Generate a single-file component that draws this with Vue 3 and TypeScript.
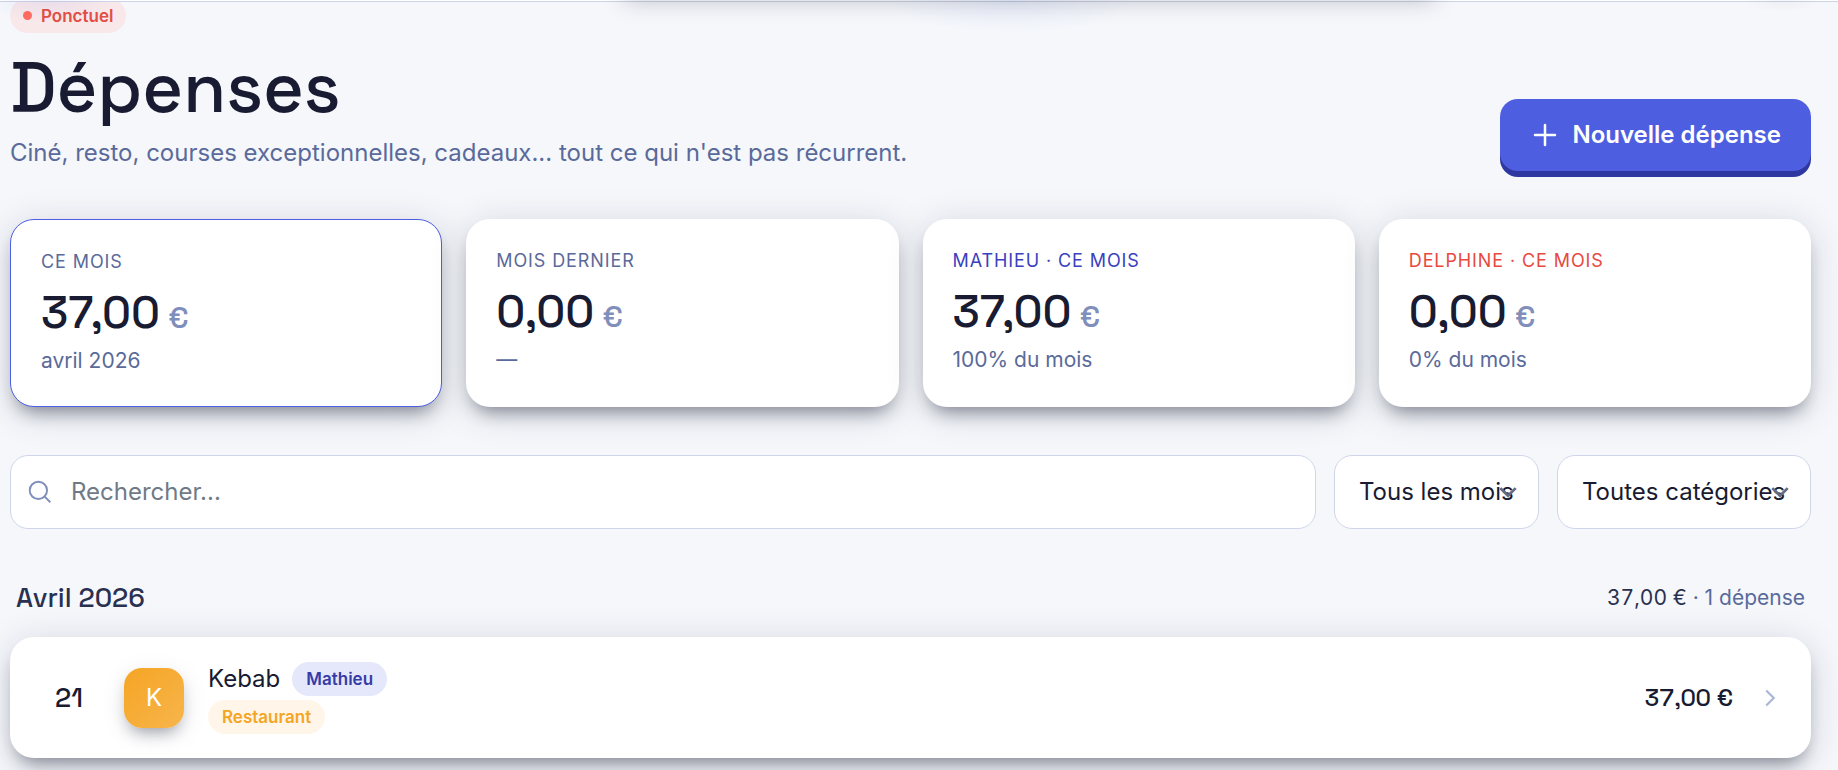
<script setup lang="ts">
import { ref } from 'vue'

interface Stat {
  label: string
  amount: string
  note: string
  tone?: 'indigo' | 'coral'
  active?: boolean
}

const stats: Stat[] = [
  { label: 'Ce mois', amount: '37,00', note: 'avril 2026', active: true },
  { label: 'Mois dernier', amount: '0,00', note: '—' },
  { label: 'Mathieu · ce mois', amount: '37,00', note: '100% du mois', tone: 'indigo' },
  { label: 'Delphine · ce mois', amount: '0,00', note: '0% du mois', tone: 'coral' },
]

const search = ref('')
const month = ref('all')
const category = ref('all')
</script>

<template>
  <div class="page">
    <div class="topbar"></div>
    <main class="content">
      <header class="head">
        <div class="intro">
          <span class="tag"><i class="dot"></i>Ponctuel</span>
          <h1>Dépenses</h1>
          <p>Ciné, resto, courses exceptionnelles, cadeaux... tout ce qui n'est pas récurrent.</p>
        </div>
        <button class="primary" type="button">
          <svg viewBox="0 0 24 24" aria-hidden="true"><path d="M12 4v16M4 12h16" /></svg>
          Nouvelle dépense
        </button>
      </header>

      <section class="stats">
        <article v-for="s in stats" :key="s.label" class="stat" :class="[s.tone, { active: s.active }]">
          <div class="label">{{ s.label }}</div>
          <div class="amount">{{ s.amount }}<span class="cur">€</span></div>
          <div class="note">{{ s.note }}</div>
        </article>
      </section>

      <form class="filters" @submit.prevent>
        <div class="search">
          <svg viewBox="0 0 24 24" aria-hidden="true">
            <circle cx="10.5" cy="10.5" r="8" />
            <path d="m16.3 16.3 5.2 5.2" />
          </svg>
          <input v-model="search" type="text" placeholder="Rechercher..." aria-label="Rechercher" />
        </div>
        <div class="pick months">
          <select v-model="month" aria-label="Mois">
            <option value="all">Tous les mois</option>
          </select>
          <svg viewBox="0 0 16 10" aria-hidden="true"><path d="m1 1 7 7 7-7" /></svg>
        </div>
        <div class="pick categories">
          <select v-model="category" aria-label="Catégorie">
            <option value="all">Toutes catégories</option>
          </select>
          <svg viewBox="0 0 16 10" aria-hidden="true"><path d="m1 1 7 7 7-7" /></svg>
        </div>
      </form>

      <section>
        <div class="group">
          <h2>Avril 2026</h2>
          <div class="total"><span>37,00 €</span> · 1 dépense</div>
        </div>
        <a class="row" href="#">
          <span class="day">21</span>
          <span class="avatar">K</span>
          <span class="info">
            <span class="title">Kebab <span class="chip person">Mathieu</span></span>
            <span class="chip category">Restaurant</span>
          </span>
          <span class="price">37,00 €</span>
          <svg viewBox="0 0 24 24" aria-hidden="true"><path d="m9 18 6-6-6-6" /></svg>
        </a>
      </section>
    </main>
  </div>
</template>

<style>
body {
  background: #f5f7fb;
}
</style>

<style scoped>
.page {
  position: relative;
  display: flow-root;
  font-family: Inter, "Liberation Sans", sans-serif;
  font-size: 24px;
  line-height: 36px;
  color: #181b31;
}
.page *,
.page *::before,
.page *::after {
  box-sizing: border-box;
}
.topbar {
  position: absolute;
  z-index: 2;
  top: 0;
  left: 0;
  right: 0;
  height: 2px;
  background: #fff;
  border-bottom: 1px solid #cdd3e8;
}
.topbar::before {
  content: "";
  position: absolute;
  top: 0;
  left: 0;
  right: 0;
  height: 36px;
  background:
    radial-gradient(120px 34px at 55% 0, rgba(77, 120, 224, 0.08), transparent),
    radial-gradient(64px 22px at 48px 0, rgba(77, 95, 224, 0.08), transparent),
    radial-gradient(40px 12px at 97% 0, rgba(24, 27, 49, 0.04), transparent);
  pointer-events: none;
}
.topbar::after {
  content: "";
  position: absolute;
  top: -24px;
  left: 34%;
  right: 22%;
  height: 20px;
  box-shadow: 0 3px 24px rgba(24, 27, 49, 0.28);
}
.content {
  padding: 0 27px 12px 10px;
}
.head {
  display: flex;
  justify-content: space-between;
  align-items: flex-end;
  margin-top: -2px;
}
.tag {
  display: flex;
  align-items: center;
  gap: 9px;
  width: max-content;
  height: 35px;
  padding: 0 13px;
  border-radius: 18px;
  background: #f8e8ea;
  color: #e34d43;
  font-size: 17px;
  font-weight: 600;
}
.dot {
  width: 9px;
  height: 9px;
  border-radius: 50%;
  background: #ff6b5e;
}
h1 {
  margin: 19px 0 0;
  font-family: "Space Grotesk", Inter, sans-serif;
  font-size: 70px;
  line-height: 72px;
  font-weight: 500;
}
.intro p {
  margin: 11px 0 0;
  color: #5a6a9a;
}
.primary {
  display: flex;
  align-items: center;
  gap: 12px;
  height: 72px;
  padding: 0 30px;
  border: 0;
  border-radius: 18px;
  background: #4d5fe0;
  box-shadow: 0 6px 0 #2f38a0;
  color: #fff;
  font: inherit;
  font-weight: 600;
}
.primary svg {
  width: 30px;
  height: 30px;
  fill: none;
  stroke: #fff;
  stroke-width: 2;
  stroke-linecap: round;
}
.stats {
  display: grid;
  grid-template-columns: repeat(4, 1fr);
  gap: 24px;
  margin-top: 48px;
}
.stat {
  height: 188px;
  padding: 30px;
  border-radius: 24px;
  background: #fff;
  box-shadow: 0 12px 18px -8px rgba(24, 27, 49, 0.48), 0 6px 36px rgba(24, 27, 49, 0.17);
}
.stat.active {
  border: 1px solid #4d5fe0;
}
.label {
  color: #5a6a9a;
  font-size: 18px;
  line-height: 24px;
  letter-spacing: 0.05em;
  text-transform: uppercase;
}
.indigo .label {
  color: #3a41be;
}
.coral .label {
  color: #e8493f;
}
.amount {
  margin-top: 15px;
  font-family: "Space Grotesk", Inter, sans-serif;
  font-size: 45px;
  line-height: 48px;
  font-weight: 500;
}
.cur {
  margin-left: 8px;
  color: #7f8eba;
  font-size: 30px;
}
.note {
  margin-top: 4px;
  color: #5a6a9a;
  font-size: 21px;
  line-height: 30px;
}
.filters {
  display: flex;
  gap: 18px;
  margin-top: 48px;
}
.search {
  position: relative;
  flex: 1;
}
.search input {
  width: 100%;
  padding: 0 24px 2px 60px;
  color: #181b31;
}
.search input,
.pick select {
  display: block;
  height: 74px;
  border: 1px solid #cfd6ea;
  border-radius: 18px;
  background: #fff;
  font: inherit;
}
.search input::placeholder {
  color: #6f7a86;
  opacity: 1;
}
.search svg {
  position: absolute;
  left: 17px;
  top: 24px;
  width: 26px;
  height: 26px;
  fill: none;
  stroke: #7f8eba;
  stroke-width: 1.75;
}
.pick {
  position: relative;
}
.pick select {
  width: 100%;
  padding: 0 24px;
  appearance: none;
  color: #181b31;
}
.months {
  width: 205px;
}
.categories {
  width: 254px;
}
.pick svg {
  position: absolute;
  right: 22px;
  top: 32px;
  width: 18px;
  height: 11px;
  fill: none;
  stroke: #666c80;
  stroke-width: 2.5;
  pointer-events: none;
}
.group {
  display: flex;
  justify-content: space-between;
  align-items: center;
  margin-top: 51px;
  padding: 0 6px;
}
h2 {
  margin: 0;
  font-family: "Space Grotesk", Inter, sans-serif;
  font-size: 27px;
  line-height: 36px;
  font-weight: 500;
  color: #2a3050;
}
.total {
  color: #5a6a9a;
  font-size: 21px;
}
.total span {
  color: #2a3050;
  font-variant-numeric: tabular-nums;
}
.row {
  display: flex;
  align-items: center;
  height: 121px;
  margin-top: 21px;
  padding: 0 28px;
  border-radius: 24px;
  background: #fff;
  box-shadow: 0 12px 18px -8px rgba(24, 27, 49, 0.48), 0 6px 36px rgba(24, 27, 49, 0.17);
  color: inherit;
  text-decoration: none;
}
.day {
  width: 62px;
  text-align: center;
  font-family: "Space Grotesk", Inter, sans-serif;
  font-size: 27px;
  font-weight: 500;
}
.avatar {
  display: grid;
  place-items: center;
  width: 60px;
  height: 60px;
  margin: 0 24px;
  border-radius: 18px;
  background: linear-gradient(135deg, #f5a524, #f7b54c);
  box-shadow: 0 9px 15px -6px rgba(24, 27, 49, 0.4), 0 6px 24px rgba(24, 27, 49, 0.1);
  color: #fff;
}
.info {
  display: flex;
  flex-direction: column;
  align-items: flex-start;
  gap: 3px;
  flex: 1;
}
.title {
  display: flex;
  align-items: center;
  gap: 12px;
}
.chip {
  padding: 0 14px;
  border-radius: 18px;
  font-size: 17px;
  line-height: 34px;
  font-weight: 600;
}
.person {
  background: #e5e8fa;
  color: #353ca8;
}
.category {
  background: #fff5e8;
  color: #f5a524;
}
.price {
  font-family: "Space Grotesk", Inter, sans-serif;
  font-weight: 500;
  font-variant-numeric: tabular-nums;
}
.row > svg {
  width: 30px;
  height: 30px;
  margin: 0 -2px 0 22px;
  fill: none;
  stroke: #aab6d6;
  stroke-width: 1.75;
}
</style>
